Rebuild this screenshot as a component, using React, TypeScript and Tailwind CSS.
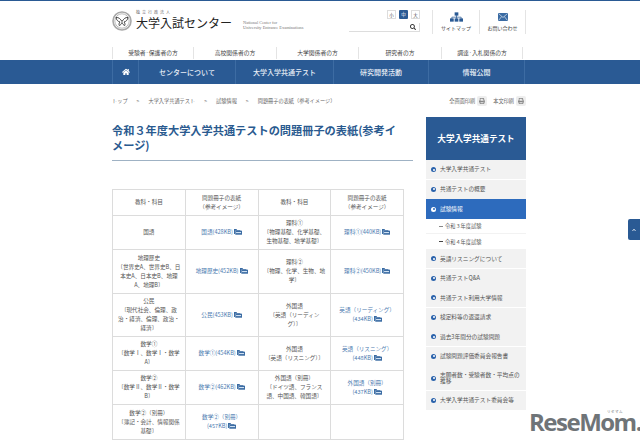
import { FaHome, FaSearch, FaPrint, FaChevronUp } from 'react-icons/fa';

const jp = "font-['Noto_Sans_CJK_JP','Noto_Sans',sans-serif]";

const subNav = [
  { label: '受験者·保護者の方', w: 'w-[81px]' },
  { label: '高校関係者の方', w: 'w-[83px]' },
  { label: '大学関係者の方', w: 'w-[82px]' },
  { label: '研究者の方', w: 'w-[83px]' },
  { label: '調達·入札関係の方', w: 'w-[82px]' },
];

const mainNav = [
  { label: 'センターについて', w: 'w-[97px]' },
  { label: '大学入学共通テスト', w: 'w-[98px]' },
  { label: '研究開発活動', w: 'w-[95px]' },
  { label: '情報公開', w: 'w-[97px]' },
];

const sideTop = ['大学入学共通テスト', '共通テストの概要'];
const sideBottom = [
  { label: '英語リスニングについて', h: 'h-[19px]' },
  { label: '共通テストQ&A', h: 'h-[19px]' },
  { label: '共通テスト利用大学情報', h: 'h-[19px]' },
  { label: '検定料等の返還請求', h: 'h-[19px]' },
  { label: '過去3年間分の試験問題', h: 'h-[19px]' },
  { label: '試験問題評価委員会報告書', h: 'h-[19px]' },
  { label: '志願者数・受験者数・平均点の推移', h: 'h-[24px]' },
  { label: '大学入学共通テスト委員会等', h: 'h-[19px]' },
];

type Cell = { subject: string[]; link?: string[] };

const rows: { h: string; cells: [Cell, Cell] }[] = [
  {
    h: 'h-[34px]',
    cells: [
      { subject: ['国語'], link: ['国語(428KB)'] },
      { subject: ['理科①', '〔物理基礎、化学基礎、', '生物基礎、地学基礎〕'], link: ['理科①(440KB)'] },
    ],
  },
  {
    h: 'h-[44px]',
    cells: [
      { subject: ['地理歴史', '〔世界史A、世界史B、日', '本史A、日本史B、地理', 'A、地理B〕'], link: ['地理歴史(452KB)'] },
      { subject: ['理科②', '〔物理、化学、生物、地', '学〕'], link: ['理科②(450KB)'] },
    ],
  },
  {
    h: 'h-[43px]',
    cells: [
      { subject: ['公民', '〔現代社会、倫理、政', '治・経済、倫理、政治・', '経済〕'], link: ['公民(453KB)'] },
      { subject: ['外国語', '〔英語（リーディン', 'グ）〕'], link: ['英語（リーディング）', '(434KB)'] },
    ],
  },
  {
    h: 'h-[34px]',
    cells: [
      { subject: ['数学①', '〔数学Ⅰ、数学Ⅰ・数学', 'A〕'], link: ['数学①(454KB)'] },
      { subject: ['外国語', '〔英語（リスニング）〕'], link: ['英語（リスニング）', '(448KB)'] },
    ],
  },
  {
    h: 'h-[34px]',
    cells: [
      { subject: ['数学②', '〔数学Ⅱ、数学Ⅱ・数学', 'B〕'], link: ['数学②(462KB)'] },
      { subject: ['外国語（別冊）', '〔ドイツ語、フランス', '語、中国語、韓国語〕'], link: ['外国語（別冊）', '(437KB)'] },
    ],
  },
  {
    h: 'h-[35px]',
    cells: [
      { subject: ['数学②（別冊）', '〔簿記・会計、情報関係', '基礎〕'], link: ['数学②（別冊）', '(457KB)'] },
      { subject: [] },
    ],
  },
];

const PdfIcon = () => (
  <svg viewBox="0 0 10 8" className="inline-block w-[8px] h-[7px] ml-[1px] align-[-1px]">
    <path d="M0 1h3l1 1h4v1H1.2V7H0z" fill="#3a6ba3" />
    <rect x="1.6" y="3" width="8.4" height="5" fill="#3a6ba3" />
    <rect x="2.6" y="4.6" width="6.2" height="1.4" fill="#cfe0f2" />
  </svg>
);

const Bullet = ({ active = false }: { active?: boolean }) => (
  <span
    className={`w-[5px] h-[5px] rounded-full shrink-0 flex items-center justify-center ${
      active ? 'bg-white' : 'bg-[#2a62ab]'
    }`}
  >
    <span className={`w-[2px] h-[2px] rounded-full ${active ? 'bg-[#2d6bbd]' : 'bg-white'}`} />
  </span>
);

const SubjectCell = ({ lines }: { lines: string[] }) => (
  <td className="border border-[#dcdcdc] px-[4px] py-0 text-center align-middle text-[#555] leading-[9px]">
    {lines.map((l) => (
      <div key={l}>{l}</div>
    ))}
  </td>
);

const LinkCell = ({ lines }: { lines?: string[] }) => (
  <td className="border border-[#dcdcdc] px-[2px] py-0 text-center align-middle text-[#4c7bb0] leading-[9px]">
    {lines?.map((l, i) => (
      <div key={l}>
        {l}
        {i === lines.length - 1 && <PdfIcon />}
      </div>
    ))}
  </td>
);

export default function App() {
  return (
    <div className={`relative w-[640px] h-[444px] overflow-hidden bg-white text-[#444] ${jp}`}>
      <div className="h-[1px] bg-[#2a5a94]" />

      {/* header */}
      <div className="ml-[112px] w-[414px] h-[45px] flex">
        <div className="flex pt-[9px]">
          <svg viewBox="0 0 20 20" className="w-[20px] h-[20px] mt-[1px]">
            <circle cx="10" cy="10" r="9" fill="none" stroke="#a8a8a8" strokeWidth="1.6" />
            <circle cx="10" cy="10" r="7.2" fill="none" stroke="#777" strokeWidth="0.5" />
            <path d="M4 6.500c2.500-.5 4.500 1.500 6 4 1.500-2.500 3.500-4.500 6-4-.3 2.500-2 4-4 4.500 1 1 1.200 2.500.7 3.500-1.200-.3-2-1.500-2.700-3-.7 1.500-1.500 2.700-2.700 3-.5-1-.3-2.500.7-3.500-2-.5-3.700-2-4-4.500z" fill="none" stroke="#333" strokeWidth="0.9" />
          </svg>
          <div className="ml-[4px]">
            <div className="h-[5px] text-[4px] leading-[5px] tracking-[2px] text-[#666]">独立行政法人</div>
            <div className="text-[12px] leading-[15px] text-[#222]">大学入試センター</div>
          </div>
          <div className="ml-[11px] mt-[10px] text-[4.4px] leading-[5px] text-[#777] font-['Liberation_Serif',serif]">
            National Center for
            <br />
            University Entrance Examinations
          </div>
        </div>

        <div className="ml-auto flex">
          <div className="flex flex-col items-end mr-[12px] pt-[9px]">
            <div className="flex gap-[3px]">
              <span className="w-[9px] h-[9px] border border-[#ddd] text-[4.5px] leading-[8px] text-center">小</span>
              <span className="w-[9px] h-[9px] bg-[#2a5a94] text-white rounded-[1px] text-[4.5px] leading-[9px] text-center">中</span>
              <span className="w-[9px] h-[9px] border border-[#ddd] text-[4.5px] leading-[8px] text-center">大</span>
            </div>
            <div className="mt-[4px] w-[71px] h-[9px] border-b border-r border-[#ddd] flex items-center justify-end pr-[3px]">
              <FaSearch className="w-[6px] h-[6px] text-[#333]" />
            </div>
          </div>
          <div className="w-[47px] h-[24px] mt-[9px] border-l border-[#e4e4e4] flex flex-col items-center">
            <svg viewBox="0 0 14 10" className="w-[13px] h-[10px] mt-[2px]">
              <rect x="5" y="0" width="4" height="3.500" fill="#2a5a94" />
              <path d="M7 3v2M2 7V5.200h10V7M7 5v2" fill="none" stroke="#2a5a94" strokeWidth="0.8" />
              <rect x="0" y="6.500" width="4" height="3.500" fill="#2a5a94" />
              <rect x="5" y="6.500" width="4" height="3.500" fill="#2a5a94" />
              <rect x="10" y="6.500" width="4" height="3.500" fill="#2a5a94" />
            </svg>
            <span className="text-[5px] leading-[7px] mt-[2px]">サイトマップ</span>
          </div>
          <div className="w-[47px] h-[24px] mt-[9px] border-x border-[#e4e4e4] flex flex-col items-center">
            <svg viewBox="0 0 10 8" className="w-[10px] h-[8px] mt-[3px]">
              <rect width="10" height="8" fill="#3a6ba3" />
              <path d="M.5.500 5 4.500 9.500.500M.5 7.500l3.200-4M9.500 7.500l-3.200-4" fill="none" stroke="#fff" strokeWidth="0.6" />
            </svg>
            <span className="text-[5px] leading-[7px] mt-[3px]">お問い合わせ</span>
          </div>
        </div>
      </div>

      {/* sub nav */}
      <div className="ml-[112px] w-[414px] h-[14px] flex items-center">
        {subNav.map((n, i) => (
          <div
            key={n.label}
            className={`${n.w} h-[12px] border-l border-[#e4e4e4] text-center text-[5.8px] leading-[12px] ${
              i === subNav.length - 1 ? 'border-r' : ''
            }`}
          >
            {n.label}
          </div>
        ))}
      </div>

      {/* main nav */}
      <div className="h-[24px] bg-[#2a5a94]">
        <div className="ml-[112px] w-[414px] h-full flex text-[#e8eef6] text-[7px] font-medium">
          <div className="w-[26px] flex items-center justify-center border-l border-[#3d6ca3]">
            <FaHome className="w-[8px] h-[8px] text-white" />
          </div>
          {mainNav.map((n) => (
            <div key={n.label} className={`${n.w} flex items-center justify-center border-l border-[#3d6ca3] last:border-r`}>
              {n.label}
            </div>
          ))}
        </div>
      </div>

      {/* breadcrumb */}
      <div className="ml-[112px] w-[414px] h-[33px] flex items-center text-[5.2px] text-[#666]">
        <span>トップ</span>
        <span className="mx-[9px]">&gt;</span>
        <span>大学入学共通テスト</span>
        <span className="mx-[9px]">&gt;</span>
        <span>試験情報</span>
        <span className="mx-[9px]">&gt;</span>
        <span>問題冊子の表紙（参考イメージ）</span>
        <span className="ml-auto">全画面印刷</span>
        <span className="ml-[2px] w-[10px] h-[10px] rounded-[2px] bg-[#eee] flex items-center justify-center">
          <FaPrint className="w-[6px] h-[6px] text-[#888]" />
        </span>
        <span className="ml-[6px]">本文印刷</span>
        <span className="ml-[2px] w-[10px] h-[10px] rounded-[2px] bg-[#eee] flex items-center justify-center">
          <FaPrint className="w-[6px] h-[6px] text-[#888]" />
        </span>
      </div>

      <div className="ml-[112px] w-[414px] flex">
        {/* main column */}
        <div className="w-[301px] pt-[6px]">
          <div className="h-[38px] border-b border-[#9fb2c4]">
            <h1 className="w-[290px] text-[#2a5a8f] text-[11.2px] leading-[15px] font-bold">
              令和３年度大学入学共通テストの問題冊子の表紙(参考イメージ)
            </h1>
          </div>
          <table className="mt-[28px] w-[292px] table-fixed border-collapse text-[5.6px]">
            <tbody>
              <tr className="h-[26px]">
                <SubjectCell lines={['教科・科目']} />
                <SubjectCell lines={['問題冊子の表紙', '（参考イメージ）']} />
                <SubjectCell lines={['教科・科目']} />
                <SubjectCell lines={['問題冊子の表紙', '（参考イメージ）']} />
              </tr>
              {rows.map((r) => (
                <tr key={r.cells[0].subject[0] + r.h} className={r.h}>
                  <SubjectCell lines={r.cells[0].subject} />
                  <LinkCell lines={r.cells[0].link} />
                  <SubjectCell lines={r.cells[1].subject} />
                  <LinkCell lines={r.cells[1].link} />
                </tr>
              ))}
            </tbody>
          </table>
        </div>

        {/* sidebar */}
        <div className="ml-[13px] w-[100px] text-[5.7px] text-[#555]">
          <div className="h-[43px] bg-[#2a5a94] text-white text-[8.6px] font-bold flex items-center justify-center">
            大学入学共通テスト
          </div>
          {sideTop.map((s) => (
            <div key={s} className="h-[19px] mb-[0.5px] bg-[#f2f2f2] flex items-center gap-[4px] pl-[5px]">
              <Bullet />
              {s}
            </div>
          ))}
          <div className="h-[20px] bg-[#2d6bbd] text-white flex items-center gap-[4px] pl-[5px]">
            <Bullet active />
            試験情報
          </div>
          <div className="h-[15px] border-b border-[#f2f2f2] flex items-center pl-[13px] text-[5.2px]">
            <span className="w-[4px] h-[1px] bg-[#888] mr-[2px]" />
            令和３年度試験
          </div>
          <div className="h-[15px] flex items-center pl-[13px] text-[5.2px]">
            <span className="w-[4px] h-[1px] bg-[#444] mr-[2px]" />
            令和４年度試験
          </div>
          {sideBottom.map((s) => (
            <div key={s.label} className={`${s.h} mb-[0.5px] bg-[#f2f2f2] flex items-center gap-[4px] pl-[5px] pr-[6px] leading-[6px]`}>
              <Bullet />
              <span>{s.label}</span>
            </div>
          ))}
        </div>
      </div>

      {/* page top button */}
      <div className="absolute left-[628px] top-[219px] w-[12px] h-[21px] bg-[#2a5a94] rounded-l-[2px] flex items-center justify-center">
        <FaChevronUp className="w-[4px] h-[4px] text-white" />
      </div>

      {/* watermark */}
      <div className="absolute left-[529px] top-[412px] h-[20px] text-[#6f7478] font-['Open_Sans',sans-serif] font-bold text-[24px] leading-[20px] tracking-[-1.5px] whitespace-nowrap">
        ReseMom.
      </div>
      <div className="absolute left-[607px] top-[409px] h-[5px] text-[#6f7478] text-[3.5px] leading-[5px] tracking-[0.5px]">リセマム</div>
    </div>
  );
}
